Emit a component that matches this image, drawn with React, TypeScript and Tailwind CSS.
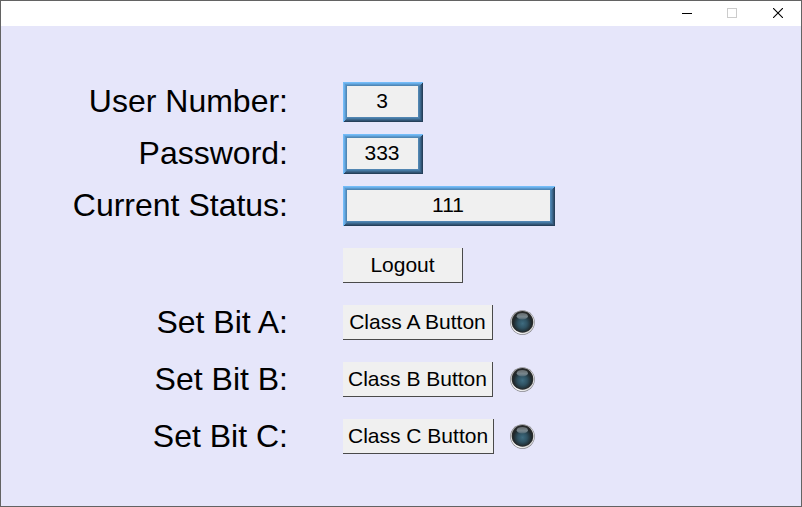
import { useState } from "react";

const fieldStyle =
  "h-10 bg-[#f0f0f0] pr-0.5 pb-0.5 text-center text-[21px] text-black outline-none shadow-[inset_1px_1px_#74bcf8,inset_-1px_-1px_#26405a,inset_2px_2px_#68ade6,inset_-2px_-2px_#315373,inset_3px_3px_#5a98cd,inset_-3px_-3px_#3d678b,inset_4px_4px_#5087b5,inset_-4px_-4px_#4579a3,inset_-5px_-5px_#5286b2]";

const buttonStyle =
  "h-[35px] border-r border-b border-[#4a4a4a] bg-[#f0f0f0] px-[5px] text-[21px] leading-6 whitespace-nowrap text-black";

const labelStyle = "w-[287px] shrink-0 pb-0.5 text-right text-[32px] leading-9 whitespace-nowrap";

const bits = ["A", "B", "C"];

function Led({ id, on }: { id: string; on: boolean }) {
  return (
    <svg className="h-[25px] w-[25px]" viewBox="0 0 25 25" aria-hidden="true">
      <defs>
        <linearGradient id={`edge${id}`} x1="0" y1="0" x2="1" y2="1">
          <stop offset="0" stopColor="#77777a" />
          <stop offset="1" stopColor="#8c8c90" />
        </linearGradient>
        <linearGradient id={`rim${id}`} x1="0" y1="0" x2="1" y2="1">
          <stop offset="0" stopColor="#a8a8a8" />
          <stop offset="0.3" stopColor="#e4e4e4" />
          <stop offset="0.6" stopColor="#ffffff" />
          <stop offset="1" stopColor="#c0c0c0" />
        </linearGradient>
        <radialGradient id={`lens${id}`} cx="0.5" cy="0.58" r="0.52">
          <stop offset="0" stopColor={on ? "#8fe3ff" : "#3f6c80"} />
          <stop offset="0.45" stopColor={on ? "#37a9d8" : "#2f5262"} />
          <stop offset="0.85" stopColor="#202a2e" />
          <stop offset="1" stopColor="#252828" />
        </radialGradient>
        <linearGradient id={`shine${id}`} x1="0" y1="0" x2="0" y2="1">
          <stop offset="0" stopColor="#70777a" />
          <stop offset="0.6" stopColor="#87949a" />
          <stop offset="1" stopColor="#506874" />
        </linearGradient>
      </defs>
      <circle cx="12.5" cy="12.5" r="12.3" fill={`url(#edge${id})`} />
      <circle cx="12.5" cy="12.4" r="11.7" fill={`url(#rim${id})`} />
      <circle cx="12.5" cy="11.9" r="10.8" fill="#2b2d2d" />
      <circle cx="12.5" cy="11.9" r="10" fill={`url(#lens${id})`} />
      <ellipse cx="12.3" cy="6.2" rx="5.6" ry="3.3" fill={`url(#shine${id})`} opacity="0.85" />
    </svg>
  );
}

function TitleBar() {
  return (
    <div className="flex h-[25px] justify-end bg-white text-black">
      <button type="button" aria-label="Minimize" className="flex w-11 items-center justify-center pb-0.5">
        <svg width="10" height="10" viewBox="0 0 10 10" shapeRendering="crispEdges">
          <path d="M0 5.5h10" stroke="#000" />
        </svg>
      </button>
      <button type="button" aria-label="Maximize" disabled className="flex w-[46px] items-center justify-center pb-0.5">
        <svg width="10" height="10" viewBox="0 0 10 10" shapeRendering="crispEdges">
          <rect x="0.5" y="0.5" width="9" height="9" fill="none" stroke="#ccc" />
        </svg>
      </button>
      <button type="button" aria-label="Close" className="flex w-[46px] items-center justify-center pb-0.5">
        <svg width="10" height="10" viewBox="0 0 10 10">
          <path d="M0 0l10 10M10 0L0 10" stroke="#000" strokeWidth="1.1" />
        </svg>
      </button>
    </div>
  );
}

export default function App() {
  const [user, setUser] = useState("3");
  const [password, setPassword] = useState("333");
  const [status, setStatus] = useState("111");
  const [active, setActive] = useState<string[]>([]);

  const toggle = (bit: string) => {
    setActive(active.includes(bit) ? active.filter((b) => b !== bit) : [...active, bit]);
  };

  const logout = () => {
    setUser("");
    setPassword("");
    setStatus("");
    setActive([]);
  };

  return (
    <div className="flex min-h-screen flex-col border border-[#636363] bg-[#e6e6fa] font-['Liberation_Sans',Arial,sans-serif] text-black">
      <TitleBar />
      <form className="flex flex-col gap-[22px] pt-14" onSubmit={(e) => e.preventDefault()}>
        <div className="flex flex-col gap-3">
          <div className="flex items-center gap-[55px]">
            <label htmlFor="user" className={labelStyle}>User Number:</label>
            <input id="user" value={user} onChange={(e) => setUser(e.target.value)} className={`${fieldStyle} w-20`} />
          </div>
          <div className="flex items-center gap-[55px]">
            <label htmlFor="password" className={labelStyle}>Password:</label>
            <input id="password" value={password} onChange={(e) => setPassword(e.target.value)} className={`${fieldStyle} w-20`} />
          </div>
          <div className="flex items-center gap-[55px]">
            <label htmlFor="status" className={labelStyle}>Current Status:</label>
            <input id="status" value={status} readOnly className={`${fieldStyle} w-[212px]`} />
          </div>
        </div>

        <div className="flex gap-[55px]">
          <div className="w-[287px] shrink-0" />
          <button type="button" onClick={logout} className={`${buttonStyle} w-[120px]`}>Logout</button>
        </div>

        {bits.map((bit) => (
          <div key={bit} className="flex h-[35px] items-center gap-[55px]">
            <span id={`bit${bit}`} className={labelStyle}>Set Bit {bit}:</span>
            <div className="flex items-center">
              <div className="w-[167px]">
                <button type="button" aria-describedby={`bit${bit}`} onClick={() => toggle(bit)} className={`${buttonStyle} min-w-[150px]`}>
                  Class {bit} Button
                </button>
              </div>
              <Led id={bit} on={active.includes(bit)} />
            </div>
          </div>
        ))}
      </form>
    </div>
  );
}
